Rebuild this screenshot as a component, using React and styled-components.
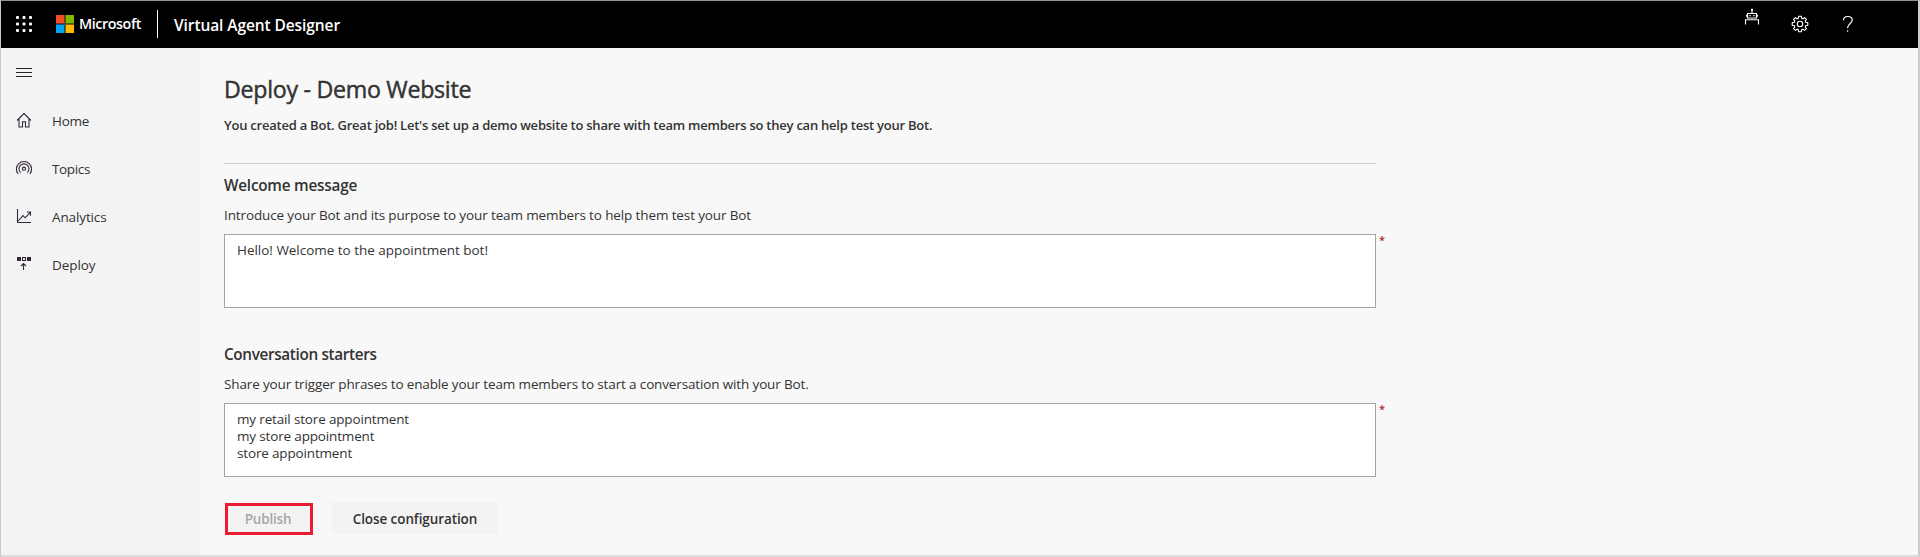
import React from "react";
import styled, { createGlobalStyle } from "styled-components";

const GlobalStyle = createGlobalStyle`
  * { box-sizing: border-box; }
  body { margin: 0; background: #f8f8f8; }
  #root { font-family: "Open Sans", "Noto Sans", sans-serif; color: #333; }
`;

const Frame = styled.div`
  display: flex;
  flex-direction: column;
  width: 1920px;
  height: 557px;
  background: #f8f8f8;
  border: 1px solid #c8c8c8;
  border-top-color: #919191;
  border-right: 2px solid #cdcdcd;
  border-bottom: 2px solid #dcdcdc;
  overflow: hidden;
`;

const Header = styled.header`
  display: flex;
  align-items: flex-start;
  flex: none;
  height: 47px;
  padding-left: 15px;
  background: #000;
  color: #fff;
`;

const Waffle = styled.svg`
  width: 16px;
  height: 16px;
  margin-top: 15px;
`;

const Brand = styled.div`
  display: flex;
  align-items: center;
  gap: 5px;
  height: 20px;
  margin: 13px 0 0 24px;
`;

const BrandName = styled.span`
  width: 63px;
  font-size: 14.3px;
  font-weight: 600;
  line-height: 20px;
  letter-spacing: -0.42px;
  white-space: nowrap;
`;

const Divider = styled.span`
  width: 1px;
  height: 28px;
  margin: 9px 0 0 15px;
  background: #fff;
`;

const AppName = styled.span`
  margin: 13px 0 0 16px;
  font-size: 15.5px;
  font-weight: 600;
  line-height: 22px;
  letter-spacing: -0.09px;
  white-space: nowrap;
`;

const HeaderTools = styled.div`
  display: flex;
  align-items: flex-start;
  margin-left: auto;
  padding-right: 64px;
`;

const BotIcon = styled.svg`
  width: 16px;
  height: 18px;
  margin: 7px 31px 0 0;
`;

const GearIcon = styled.svg`
  width: 18px;
  height: 18px;
  margin: 14px 33px 0 0;
`;

const HelpIcon = styled.svg`
  width: 12px;
  height: 18px;
  margin-top: 14px;
`;

const Body = styled.div`
  display: flex;
  flex: 1;
`;

const Sidebar = styled.nav`
  flex: none;
  width: 199px;
  padding-left: 15px;
  background: #f3f3f3;
`;

const MenuButton = styled.div`
  display: flex;
  flex-direction: column;
  justify-content: space-between;
  width: 16px;
  height: 9px;
  margin: 20px 0;
`;

const MenuLine = styled.span`
  height: 1px;
  background: #222;
`;

const NavItem = styled.a`
  display: flex;
  align-items: center;
  height: 48px;
  font-size: 13.5px;
  line-height: 20px;
  letter-spacing: ${(p) => p.$tracking}px;
`;

const NavIcon = styled.svg`
  width: 18px;
  height: 18px;
  margin: 0 19px 2px -1px;
  fill: none;
  stroke: #32283a;
  stroke-width: 1.1;
`;

const Main = styled.main`
  width: 1176px;
  padding: 25px 0 0 24px;
`;

const Title = styled.h1`
  margin: 0;
  font-size: 23.2px;
  font-weight: 500;
  line-height: 32px;
  letter-spacing: -0.28px;
  -webkit-text-stroke: 0.45px #333;
`;

const Subtitle = styled.p`
  margin: 10px 0 0;
  font-size: 13px;
  font-weight: 600;
  line-height: 20px;
  letter-spacing: -0.235px;
  white-space: nowrap;
`;

const Rule = styled.hr`
  height: 1px;
  margin: 28px 0 9px;
  border: 0;
  background: #cecece;
`;

const Section = styled.section`
  & + & { margin-top: 34px; }
`;

const SectionTitle = styled.h2`
  margin: 0;
  font-size: 15.3px;
  font-weight: 600;
  line-height: 24px;
  letter-spacing: ${(p) => p.$tracking}px;
`;

const Hint = styled.p`
  margin: 8px 0 9px;
  font-size: 13.5px;
  line-height: 20px;
  letter-spacing: ${(p) => p.$tracking}px;
`;

const Field = styled.div`
  position: relative;
  height: 74px;
  padding: 7px 12px;
  border: 1px solid #a3a3a3;
  background: #fff;
`;

const FieldLine = styled.div`
  font-size: 13.5px;
  line-height: 17px;
  letter-spacing: ${(p) => p.$tracking}px;
`;

const Required = styled.span`
  position: absolute;
  top: -2px;
  left: calc(100% + 4px);
  font-size: 11px;
  font-weight: 600;
  line-height: 14px;
  color: #a4262c;
`;

const Actions = styled.div`
  display: flex;
  align-items: flex-start;
  gap: 19px;
  margin-top: 25px;
`;

const Button = styled.button`
  width: ${(p) => p.$width}px;
  height: 32px;
  padding: 1px 0 0;
  border: 0;
  background: #f3f3f3;
  color: #333;
  font: 600 13.5px/20px "Open Sans", "Noto Sans", sans-serif;
  letter-spacing: -0.09px;
`;

const PublishButton = styled(Button)`
  margin: 1px 0 0 1px;
  padding: 0 2px 0 0;
  border: 3px solid #ed1c35;
  color: #a6a6a6;
  letter-spacing: -0.2px;
`;

const dots = [1.5, 8, 14.5];

const navItems = [
  {
    label: "Home",
    tracking: -0.3,
    icon: <path d="M2 9.5 9 2.6l7 6.9M4 8v8h3.5v-5.2h3V16H14V8" />,
  },
  {
    label: "Topics",
    tracking: -0.35,
    icon: (
      <>
        <circle cx="9" cy="9.7" r="1.6" />
        <path d="M5.8 13.7a5 5 0 1 1 6.4 0M3.2 15a7.6 7.6 0 1 1 11.6 0" />
      </>
    ),
  },
  {
    label: "Analytics",
    tracking: -0.12,
    icon: <path d="M2.5 2v13.5H16M3.2 14 8 8.6l2.2 2.2 5.1-5.5M11.8 5h3.7v3.7" />,
  },
  {
    label: "Deploy",
    tracking: -0.08,
    icon: (
      <>
        <path d="M2 2h4v4H2zM12 2h4v4h-4z" fill="#32283a" stroke="none" />
        <path d="M7.5 2.5h3v3h-3zM8.5 15V8.5M6 11l2.5-2.5L11 11" />
      </>
    ),
  },
];

const sections = [
  {
    title: "Welcome message",
    titleTracking: -0.22,
    hint: "Introduce your Bot and its purpose to your team members to help them test your Bot",
    hintTracking: -0.123,
    lineTracking: -0.024,
    lines: ["Hello! Welcome to the appointment bot!"],
  },
  {
    title: "Conversation starters",
    titleTracking: -0.35,
    hint: "Share your trigger phrases to enable your team members to start a conversation with your Bot.",
    hintTracking: -0.14,
    lineTracking: -0.16,
    lines: ["my retail store appointment", "my store appointment", "store appointment"],
  },
];

export default function App() {
  return (
    <>
      <GlobalStyle />
      <Frame>
        <Header>
          <Waffle viewBox="0 0 16 16" fill="#fff">
            {dots.flatMap((y) =>
              dots.map((x) => <rect key={`${x}-${y}`} x={x - 1.5} y={y - 1.5} width="3" height="3" rx="1" />)
            )}
          </Waffle>
          <Brand>
            <svg width="18" height="18" viewBox="0 0 18 18">
              <path fill="#803018" d="M0 0h9v9H0z" />
              <path fill="#456010" d="M9 0h9v9H9z" />
              <path fill="#00557a" d="M0 9h9v9H0z" />
              <path fill="#806008" d="M9 9h9v9H9z" />
              <path fill="#f25022" d="M0 0h8v8H0z" />
              <path fill="#7fba00" d="M10 0h8v8h-8z" />
              <path fill="#00a4ef" d="M0 10h8v8H0z" />
              <path fill="#ffb900" d="M10 10h8v8h-8z" />
            </svg>
            <BrandName>Microsoft</BrandName>
          </Brand>
          <Divider />
          <AppName>Virtual Agent Designer</AppName>
          <HeaderTools>
            <BotIcon viewBox="0 0 16 18" fill="none" stroke="#fff" strokeWidth="1.1">
              <path d="M8 5V2M3.5 5.5h9v4.5h-9zM1.5 16.5v-4.8h13v4.8M2.6 6.8v2M13.4 6.8v2" />
              <path d="M7 .8h2v1.6H7zM5.4 7h1.4v1.3H5.4zM9.2 7h1.4v1.3H9.2z" fill="#fff" stroke="none" />
            </BotIcon>
            <GearIcon viewBox="0 0 18 18" fill="none" stroke="#fff" strokeWidth="1.1">
              <path d="M7.7 1.2h2.6l.4 2.1 1.1.5 1.8-1.2 1.8 1.8-1.2 1.8.5 1.1 2.1.4v2.6l-2.1.4-.5 1.1 1.2 1.8-1.8 1.8-1.8-1.2-1.1.5-.4 2.1H7.7l-.4-2.1-1.1-.5-1.8 1.2-1.8-1.8 1.2-1.8-.5-1.1-2.1-.4V7.7l2.1-.4.5-1.1-1.2-1.8 1.8-1.8 1.8 1.2 1.1-.5z" />
              <circle cx="9" cy="9" r="2.7" />
            </GearIcon>
            <HelpIcon viewBox="0 0 12 18" fill="none" stroke="#fff" strokeWidth="1.2">
              <path d="M1.5 5.2C1.5 2.8 3.2 1.5 5.8 1.5c2.7 0 4.4 1.5 4.4 3.6 0 3.4-4.6 3.9-4.6 7.6v.5M5.6 15.2v1.6" />
            </HelpIcon>
          </HeaderTools>
        </Header>
        <Body>
          <Sidebar>
            <MenuButton>
              <MenuLine />
              <MenuLine />
              <MenuLine />
            </MenuButton>
            {navItems.map((item) => (
              <NavItem key={item.label} $tracking={item.tracking}>
                <NavIcon viewBox="0 0 18 18">{item.icon}</NavIcon>
                {item.label}
              </NavItem>
            ))}
          </Sidebar>
          <Main>
            <Title>Deploy - Demo Website</Title>
            <Subtitle>
              You created a Bot. Great job! Let's set up a demo website to share with team members so they can help
              test your Bot.
            </Subtitle>
            <Rule />
            {sections.map((s) => (
              <Section key={s.title}>
                <SectionTitle $tracking={s.titleTracking}>{s.title}</SectionTitle>
                <Hint $tracking={s.hintTracking}>{s.hint}</Hint>
                <Field>
                  {s.lines.map((line) => (
                    <FieldLine key={line} $tracking={s.lineTracking}>
                      {line}
                    </FieldLine>
                  ))}
                  <Required>*</Required>
                </Field>
              </Section>
            ))}
            <Actions>
              <PublishButton $width={88} disabled>
                Publish
              </PublishButton>
              <Button $width={166}>Close configuration</Button>
            </Actions>
          </Main>
        </Body>
      </Frame>
    </>
  );
}
